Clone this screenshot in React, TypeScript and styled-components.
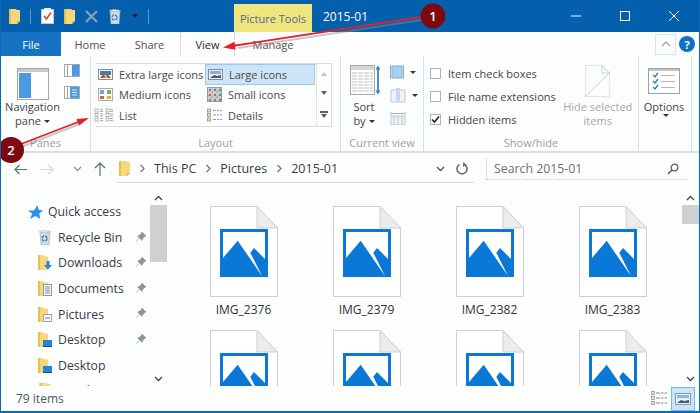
import React from 'react';
import styled, { createGlobalStyle } from 'styled-components';

const GlobalStyle = createGlobalStyle`
  html, body { margin: 0; padding: 0; background: #fff; }
  body { font-family: "Open Sans", "Noto Sans", sans-serif; font-size: 11px; color: #3c3c3c; }
`;

const Window = styled.div`
  position: relative;
  width: 700px;
  height: 413px;
  box-sizing: border-box;
  display: flex;
  flex-direction: column;
  overflow: hidden;
  background: #fcfdfd;
  border: solid #0f68b4;
  border-width: 0 1px 2px 1px;
`;

const TitleBar = styled.div`
  height: 32px;
  flex: none;
  margin: 0 -1px;
  display: flex;
  align-items: center;
  background: #0460ad;
  color: #fff;
`;

const Qat = styled.div`
  width: 234px;
  display: flex;
  align-items: center;
  gap: 10px;
  padding-left: 9px;
  box-sizing: border-box;
`;

const QatSep = styled.span`
  width: 1px;
  height: 15px;
  background: #5f95c7;
`;

const ContextTab = styled.div`
  align-self: flex-end;
  width: 78px;
  height: 28px;
  display: flex;
  align-items: center;
  justify-content: center;
  background: #efe57f;
  color: #54698c;
  font-size: 11px;
`;

const WindowTitle = styled.div`
  margin-left: 11px;
  flex: 1;
  font-size: 12px;
`;

const WinButtons = styled.div`
  display: flex;
  align-items: center;
  gap: 39px;
  padding-right: 21px;
`;

const TabRow = styled.div`
  height: 24px;
  flex: none;
  display: flex;
  align-items: stretch;
  background: #fdfdfd;
`;

const FileTab = styled.div`
  width: 60px;
  display: flex;
  align-items: center;
  justify-content: center;
  background: #1673c4;
  color: #fff;
`;

const Tab = styled.div<{ $w: number; $active?: boolean }>`
  width: ${p => p.$w}px;
  display: flex;
  align-items: center;
  justify-content: center;
  color: ${p => (p.$active ? '#2b2b2b' : '#505050')};
  ${p => p.$active && 'border: dotted #c4c4c4; border-width: 0 1px;'}
`;

const TabTools = styled.div`
  margin-left: auto;
  display: flex;
  align-items: center;
  gap: 3px;
  padding-right: 4px;
`;

const CollapseBtn = styled.div`
  width: 21px;
  height: 21px;
  display: flex;
  align-items: center;
  justify-content: center;
  border: 1px solid #cfe6f7;
  box-sizing: border-box;
`;

const HelpBadge = styled.div`
  width: 16px;
  height: 16px;
  border-radius: 50%;
  background: #0b72c6;
  color: #fff;
  font-size: 11px;
  font-weight: 700;
  display: flex;
  align-items: center;
  justify-content: center;
`;

const Ribbon = styled.div`
  height: 97px;
  flex: none;
  display: flex;
  box-sizing: border-box;
  border-bottom: 2px solid #dcdfe1;
`;

const Group = styled.div<{ $w: number }>`
  width: ${p => p.$w}px;
  flex: none;
  display: flex;
  flex-direction: column;
  box-sizing: border-box;
  border-right: 1px dotted #a9cbe3;
`;

const GroupBody = styled.div`
  flex: 1;
  display: flex;
  min-height: 0;
`;

const GroupLabel = styled.div`
  height: 18px;
  display: flex;
  align-items: center;
  justify-content: center;
  color: #a0a0a0;
`;

const BigButton = styled.div<{ $w: number; $muted?: boolean }>`
  width: ${p => p.$w}px;
  flex: none;
  display: flex;
  flex-direction: column;
  align-items: center;
  padding-top: 9px;
  line-height: 14px;
  text-align: center;
  white-space: nowrap;
  color: ${p => (p.$muted ? '#a8a8a8' : '#444')};
`;

const IconSlot = styled.div<{ $top: number }>`
  height: 35px;
  box-sizing: border-box;
  padding-top: ${p => p.$top}px;
  display: flex;
`;

const Caret = styled.span`
  display: inline-block;
  margin-left: 3px;
  vertical-align: 2px;
  border: 3px solid transparent;
  border-top: 3px solid #333;
  border-bottom: 0;
`;

const PaneIcons = styled.div`
  display: flex;
  flex-direction: column;
  gap: 9px;
  padding-top: 8px;
`;

const Gallery = styled.div`
  margin: 7px 0 0 5px;
  width: 236px;
  height: 64px;
  box-sizing: border-box;
  display: flex;
  border: solid #dcdcdc;
  border-width: 1px 1px 1px 0;
`;

const GalleryGrid = styled.div`
  width: 220px;
  display: grid;
  grid-template-columns: 109px 110px;
  grid-auto-rows: 20.5px;
`;

const GalleryItem = styled.div<{ $selected?: boolean }>`
  display: flex;
  align-items: center;
  gap: 6px;
  padding-left: 2px;
  white-space: nowrap;
  color: #4a4a4a;
  box-sizing: border-box;
  ${p => p.$selected && 'background: #cde4f7; outline: 1px solid #9cc8ee; outline-offset: -1px; padding-left: 3px;'}
`;

const GalleryScroll = styled.div`
  flex: 1;
  display: flex;
  flex-direction: column;
  align-items: center;
  justify-content: space-around;
  border-left: 1px dotted #cfcfcf;
`;

const Tri = styled.span<{ $up?: boolean; $light?: boolean; $dark?: boolean }>`
  width: 0;
  height: 0;
  border: 3.5px solid transparent;
  ${p => (p.$up ? 'border-top: 0;' : 'border-bottom: 0;')}
  ${p => (p.$up ? 'border-bottom' : 'border-top')}: 4px solid ${p => (p.$light ? '#bfc7cf' : p.$dark ? '#10202e' : '#56606b')};
`;

const MoreMark = styled.span`
  display: flex;
  flex-direction: column;
  align-items: center;
  gap: 1px;
  &::before {
    content: '';
    width: 8px;
    height: 2px;
    background: #56606b;
  }
`;

const ViewIcons = styled.div`
  display: flex;
  flex-direction: column;
  gap: 8px;
  padding: 9px 0 0 3px;
`;

const IconWithCaret = styled.div`
  display: flex;
  align-items: center;
  gap: 3px;
`;

const CheckList = styled.div`
  flex: 1;
  padding: 6px 0 0 6px;
  display: grid;
  grid-auto-rows: 23px;
`;

const CheckRow = styled.label`
  display: flex;
  align-items: center;
  gap: 7px;
  white-space: nowrap;
  color: #444;
`;

const CheckBox = styled.span`
  width: 11px;
  height: 11px;
  box-sizing: border-box;
  border: 1px solid #a9b4c0;
  background: #fff;
  display: flex;
  align-items: center;
  justify-content: center;
`;

const AddressRow = styled.div`
  height: 30px;
  flex: none;
  box-sizing: border-box;
  padding-top: 2px;
  display: flex;
  align-items: center;
`;

const NavButtons = styled.div`
  width: 115px;
  flex: none;
  display: flex;
  align-items: center;
  gap: 19px;
  padding-left: 13px;
  box-sizing: border-box;
`;

const NavPair = styled.div`
  display: flex;
  align-items: center;
  gap: 12px;
`;

const PathBox = styled.div`
  width: 358px;
  height: 28px;
  flex: none;
  display: flex;
  align-items: center;
  gap: 8.5px;
  padding: 0 3px;
  box-sizing: border-box;
  border-bottom: 1px solid #d3dde6;
  font-size: 12.5px;
  color: #3e3e3e;
`;

const PathTail = styled.div`
  margin-left: auto;
  display: flex;
  align-items: center;
  gap: 11px;
  padding-right: 2px;
`;

const SearchBox = styled.div`
  margin-left: 12px;
  width: 202px;
  height: 22px;
  flex: none;
  display: flex;
  align-items: center;
  justify-content: space-between;
  padding: 0 9px 0 7px;
  box-sizing: border-box;
  border-left: 1px solid #d8dde2;
  border-bottom: 1px dotted #bfc7cf;
  color: #6f6f6f;
  font-size: 12.3px;
`;

const Body = styled.div`
  flex: 1;
  min-height: 0;
  display: flex;
  overflow: hidden;
`;

const Sidebar = styled.div`
  width: 166px;
  flex: none;
  display: flex;
`;

const Tree = styled.div`
  flex: 1;
  padding-top: 16px;
  overflow: hidden;
  font-size: 12.3px;
  color: #3a3a4a;
`;

const TreeRow = styled.div<{ $root?: boolean }>`
  height: 25.6px;
  display: flex;
  align-items: center;
  gap: ${p => (p.$root ? 5 : 6)}px;
  padding-left: ${p => (p.$root ? 27 : 37)}px;
  position: relative;
  svg { flex: none; }
`;

const Pin = styled.span`
  position: absolute;
  left: 135px;
  top: 7px;
  display: flex;
`;

const ScrollBar = styled.div`
  width: 17px;
  flex: none;
  display: flex;
  flex-direction: column;
  align-items: center;
  padding: 12px 0 4px;
  box-sizing: border-box;
`;

const Thumb = styled.div<{ $h: number }>`
  width: 100%;
  height: ${p => p.$h}px;
  margin-top: 4px;
  background: #cfd1d1;
`;

const Chevron = styled.svg`
  flex: none;
`;

const Spacer = styled.div`
  flex: 1;
`;

const Grid = styled.div`
  flex: 1;
  padding: 23px 0 0 15px;
  display: grid;
  grid-template-columns: repeat(4, 123px);
  grid-auto-rows: 124px;
  overflow: hidden;
`;

const Card = styled.div`
  display: flex;
  flex-direction: column;
  align-items: center;
  gap: 4px;
  font-size: 12px;
  color: #333;
  line-height: 17px;
`;

const StatusBar = styled.div`
  height: 25px;
  flex: none;
  display: flex;
  align-items: center;
  padding-left: 15px;
  color: #4c5a6a;
  font-size: 12px;
`;

const StatusViews = styled.div`
  margin-left: auto;
  display: flex;
  align-items: center;
  gap: 4px;
  padding-right: 4px;
`;

const StatusActive = styled.div`
  width: 24px;
  height: 24px;
  display: flex;
  align-items: center;
  justify-content: center;
  background: #cde4f7;
  border: 1px solid #74b9ed;
  box-sizing: border-box;
`;

const Annotations = styled.svg`
  position: absolute;
  left: -1px;
  top: 0;
  pointer-events: none;
`;

const AnnotationNumber = styled.text`
  font-family: "Open Sans", sans-serif;
  font-size: 13px;
  font-weight: 600;
  fill: #fff;
  text-anchor: middle;
`;

/* drawings */

const Folder = ({ w = 11, h = 15 }: { w?: number; h?: number }) => (
  <svg width={w} height={h} viewBox="0 0 11 15">
    <path d="M0 0h7l1 1h3v11l-3 3H0z" fill="#f6d77e" />
    <path d="M0 0h2v15H0z" fill="#e8bd52" />
    <path d="M8 12l3 0-3 3z" fill="#d8b25a" />
  </svg>
);

const QatCheck = () => (
  <svg width={13} height={16} viewBox="0 0 13 16">
    <rect x=".5" y="1.5" width="12" height="14" fill="#fff" stroke="#c7c7c7" />
    <path d="M3 2V0h7v2z" fill="#e9e9e9" />
    <path d="M3 8l2.500 3L10 4.500" fill="none" stroke="#d9472b" strokeWidth="1.600" />
  </svg>
);

const QatDelete = () => (
  <svg width={13} height={13} viewBox="0 0 13 13">
    <path d="M1 1l11 11M12 1L1 12" stroke="#8aa2b8" strokeWidth="2.200" />
  </svg>
);

const Recycle = () => (
  <svg width={14} height={15} viewBox="0 0 14 15">
    <path d="M2 2h10l-1 13H3z" fill="#d3dade" stroke="#a0aab2" strokeWidth=".6" />
    <path d="M1 1.500L6 .3l7 1.200-6 1.200z" fill="#e8edf0" stroke="#a0aab2" strokeWidth=".4" />
    <circle cx="6.500" cy="8.500" r="2.500" fill="none" stroke="#2b86d6" strokeWidth="1.400" strokeDasharray="3 1" />
  </svg>
);

const WinMin = () => (
  <svg width={10} height={10}><path d="M0 5h10" stroke="#fff" /></svg>
);
const WinMax = () => (
  <svg width={10} height={10}><rect x=".5" y=".5" width="9" height="9" fill="none" stroke="#fff" /></svg>
);
const WinClose = () => (
  <svg width={10} height={10}><path d="M0 0l10 10M10 0L0 10" stroke="#fff" /></svg>
);

const NavPaneIcon = () => (
  <svg width={32} height={32} viewBox="0 0 32 32">
    <rect x=".5" y=".5" width="31" height="31" fill="#fff" stroke="#a8a8a8" />
    <rect x="1" y="1" width="30" height="3" fill="#c9c9c9" />
    <rect x="2" y="5" width="12" height="25" fill="#4a9be3" />
  </svg>
);

const PaneSmall = ({ right }: { right?: boolean }) => (
  <svg width={16} height={13} viewBox="0 0 16 13">
    <rect x=".5" y=".5" width="15" height="12" fill="#fff" stroke="#a8a8a8" />
    <rect x={right ? 6 : 8} y="1" width={right ? 9 : 7} height="11" fill="#4a9be3" />
    <rect x="3" y="1" width="1" height="11" fill="#8fa0ad" />
    {right && <path d="M8 4h5M8 6.500h5M8 9h5" stroke="#d4e8f9" />}
  </svg>
);

const GalleryIcon = ({ kind }: { kind: string }) => {
  if (kind === 'xl') {
    return (
      <svg width={15} height={11} viewBox="0 0 15 11">
        <rect x=".5" y=".5" width="14" height="10" fill="#fff" stroke="#8a8a8a" />
        <rect x="2" y="2" width="11" height="4" fill="#2e80c8" />
        <path d="M2 9l3-4 2 2 2-3 4 5z" fill="#c8512a" />
        <rect x="7" y="6" width="2" height="3" fill="#e8b23e" />
      </svg>
    );
  }
  if (kind === 'large') {
    return (
      <svg width={15} height={11} viewBox="0 0 15 11">
        <rect x=".5" y=".5" width="14" height="10" fill="#e9f1f8" stroke="#8a8a8a" />
        <rect x="2" y="2" width="11" height="3" fill="#7fb3e0" />
        <path d="M2 9l4-3 3 1 4-1v3z" fill="#3f5f78" />
      </svg>
    );
  }
  if (kind === 'medium') {
    return (
      <svg width={15} height={13} viewBox="0 0 15 13">
        <rect x=".5" y=".5" width="14" height="12" fill="#fff" stroke="#aaa" />
        <rect x="2" y="2" width="4" height="4" fill="#6ca6d8" />
        <rect x="9" y="2" width="4" height="4" fill="#88a86a" />
        <rect x="2" y="8" width="4" height="3" fill="#d4683a" />
        <rect x="9" y="8" width="4" height="3" fill="#e0b040" />
      </svg>
    );
  }
  if (kind === 'small') {
    const cells = [0, 1, 2].flatMap(r => [0, 1, 2].map(c => [r, c]));
    const colors = ['#5c8fc0', '#c9683c', '#6f9460'];
    return (
      <svg width={15} height={15} viewBox="0 0 15 15">
        <rect x=".5" y=".5" width="14" height="14" fill="#fff" stroke="#999" />
        <path d="M5 0v15M10 0v15M0 5h15M0 10h15" stroke="#999" />
        {cells.map(([r, c]) => (
          <rect key={`${r}${c}`} x={c * 5 + 1.5} y={r * 5 + 1.5} width="2.500" height="2.500" fill={colors[(r + c) % 3]} />
        ))}
      </svg>
    );
  }
  if (kind === 'list') {
    return (
      <svg width={15} height={14} viewBox="0 0 15 14" overflow="visible">
        {[1, 5.5, 10].map(y => (
          <g key={y}>
            <rect x="-3" y={y} width="3" height="3" fill="#fff" stroke="#999" strokeWidth=".7" />
            <path d={`M2 ${y + 0.5}h3M2 ${y + 2.5}h3`} stroke="#aaa" />
            <rect x="8" y={y} width="3" height="3" fill="#fff" stroke="#999" strokeWidth=".7" />
            <path d={`M12 ${y + 0.5}h3M12 ${y + 2.5}h3`} stroke="#aaa" />
          </g>
        ))}
      </svg>
    );
  }
  return (
    <svg width={15} height={14} viewBox="0 0 15 14">
      {[1, 5.5, 10].map(y => (
        <g key={y}>
          <rect x=".5" y={y} width="3" height="3" fill="#f4d9b0" stroke="#888" strokeWidth=".7" />
          <path d={`M6 ${y + 1.5}h3M10 ${y + 1.5}h2M13 ${y + 1.5}h2`} stroke="#999" />
        </g>
      ))}
    </svg>
  );
};

const SortIcon = () => (
  <svg width={32} height={31} viewBox="0 0 32 31">
    <rect x="2.500" y=".5" width="24" height="29" fill="#fff" stroke="#a6a6a6" />
    <rect x="3" y="1" width="23" height="4" fill="#d5d5d5" />
    {[8, 11, 14, 17, 20, 23, 26].map(y => (
      <path key={y} d={`M4 ${y}h21`} stroke="#bdbdbd" strokeDasharray="5 1" />
    ))}
    <path d="M30 3v24" stroke="#2f83cf" strokeWidth="1.800" />
    <path d="M27.500 4.500L30 .5l2.500 4zM27.500 25.500l2.500 4 2.500-4z" fill="#2f83cf" />
  </svg>
);

const GroupByIcon = () => (
  <svg width={14} height={14} viewBox="0 0 14 14">
    <path d="M1 .5H.5v13H1M13 .5h.5v13H13" fill="none" stroke="#9aa5af" />
    <rect x="2" y="1" width="10" height="12" fill="#a9d0ee" stroke="#7fb4de" />
  </svg>
);

const AddColumnsIcon = () => (
  <svg width={16} height={16} viewBox="0 0 16 16">
    <path d="M1 3h14v12H1z" fill="#eef3f7" stroke="#c0c8cf" />
    <rect x="6" y="1" width="4" height="14" fill="#c5d9ea" />
  </svg>
);

const FitColumnsIcon = () => (
  <svg width={16} height={14} viewBox="0 0 16 14">
    <path d="M1 1v3M15 1v3M2 2.500h12" stroke="#9fb3c4" />
    <rect x="1" y="5" width="14" height="9" fill="#eef3f7" stroke="#c0c8cf" />
    <path d="M4 5v9M8 5v9M12 5v9" stroke="#c0c8cf" />
  </svg>
);

const HideIcon = () => (
  <svg width={25} height={32} viewBox="0 0 25 32">
    <path d="M.5.500H17L24.500 8v23.500H.5z" fill="#fbfdfe" stroke="#c8d8e4" strokeDasharray="1.500 1" />
    <path d="M17 .5V8h7.500zM.5 31.500L24.500 8" fill="none" stroke="#c8d0d6" />
  </svg>
);

const OptionsIcon = () => (
  <svg width={32} height={26} viewBox="0 0 32 26">
    <rect x=".5" y=".5" width="31" height="25" fill="#fff" stroke="#a0a0a0" />
    <rect x="1" y="1" width="30" height="2" fill="#c4c4c4" />
    {[7, 13, 19].map(y => (
      <g key={y}>
        <path d={`M5 ${y}l2 2 3-4`} fill="none" stroke="#2a7fd0" strokeWidth="1.400" />
        <path d={`M13 ${y + 0.5}h14`} stroke="#b5b5b5" />
      </g>
    ))}
  </svg>
);

const ArrowIcon = ({ color = '#5f6b75', dir = 1 }: { color?: string; dir?: number }) => (
  <svg width={14} height={11} viewBox="0 0 14 11">
    <g transform={dir < 0 ? 'matrix(-1 0 0 1 14 0)' : undefined}>
      <path d="M1 5.500h12M5.500 1L1 5.500 5.500 10" fill="none" stroke={color} strokeWidth="1.200" />
    </g>
  </svg>
);

const UpArrow = () => (
  <svg width={12} height={14} viewBox="0 0 12 14">
    <path d="M6 14V1M1 6l5-5 5 5" fill="none" stroke="#5f6b75" strokeWidth="1.200" />
  </svg>
);

const Small = ({ d, color = '#6a737c', w = 9, h = 6 }: { d: string; color?: string; w?: number; h?: number }) => (
  <Chevron width={w} height={h} viewBox={`0 0 ${w} ${h}`}>
    <path d={d} fill="none" stroke={color} strokeWidth="1.300" />
  </Chevron>
);

const ChevUp = () => <Small d="M1 5l3.500-3.500L8 5" color="#444" />;
const ChevDown = () => <Small d="M1 1l3.500 3.500L8 1" color="#444" />;
const Crumb = () => <Small d="M1.500 1l3.500 3.500L1.500 8" w={7} h={9} color="#777" />;

const Refresh = () => (
  <svg width={13} height={13} viewBox="0 0 13 13">
    <path d="M8.500 2.500a5 5 0 1 1-5 0" fill="none" stroke="#6f6f6f" strokeWidth="1.600" />
    <path d="M7 0l3.500 2.500L7 5z" fill="#6f6f6f" />
  </svg>
);

const Magnifier = () => (
  <svg width={12} height={12} viewBox="0 0 12 12">
    <circle cx="7.500" cy="4.500" r="3.300" fill="none" stroke="#5f5f5f" strokeWidth="1.300" />
    <path d="M5 7l-4 4" stroke="#5f5f5f" strokeWidth="1.600" />
  </svg>
);

const Star = () => (
  <svg width={15} height={14} viewBox="0 0 15 14">
    <path d="M9.500 0l1 4.800 4.500.7-3.800 3 1 5.500-4.700-3L2 14l2.200-5.200L0 5.500h6z" fill="#2c8fe8" />
  </svg>
);

const PinIcon = () => (
  <svg width={10} height={10} viewBox="0 0 10 10">
    <path d="M6 0l4 4-1.500.5L6.500 7 6 8.500 1.500 4 3 3.500 5.500 1.500zM3 6.500L.5 9.500" fill="#8c939b" stroke="#8c939b" strokeWidth=".6" />
  </svg>
);

const FolderBadge = ({ badge }: { badge: 'down' | 'doc' | 'pic' | 'desk' }) => (
  <svg width={14} height={15} viewBox="0 0 14 15">
    <path d="M0 0h5l1 1.500h4V15H0z" fill="#f6d77e" />
    <path d="M0 0h2v15H0z" fill="#e8bd52" />
    {badge === 'down' && <path d="M8.500 6h3v4H14l-4 4.500L6 10h2.500z" fill="#2a83d4" />}
    {badge === 'doc' && (
      <g>
        <rect x="5.500" y="3.500" width="8" height="11" fill="#fff" stroke="#8c98a5" />
        <path d="M7 6h5M7 8h5M7 10h5M7 12h5" stroke="#6a8fb2" />
      </g>
    )}
    {badge === 'pic' && (
      <g>
        <rect x="5.500" y="7.500" width="8" height="7" fill="#fff" stroke="#9aa3ab" />
        <path d="M7 11h5" stroke="#5c6d7c" />
      </g>
    )}
    {badge === 'desk' && (
      <g>
        <rect x="5" y="8" width="9" height="6" fill="#1f85dd" />
        <path d="M5 14.500h9" stroke="#445" />
      </g>
    )}
  </svg>
);

const ImageDoc = () => (
  <svg width={68} height={91} viewBox="0 0 68 91">
    <path d="M.5.500H47L67.500 22v68.500H.5z" fill="#fff" stroke="#cfcfcf" />
    <path d="M47 .5V22h20.500z" fill="#ececec" stroke="#cfcfcf" />
    <rect x="10" y="23" width="48" height="48" fill="#0a78d7" />
    <path d="M13 26h42v27L44 42l-3.700 4.700L52 70 27.700 34.700 13 52z" fill="#fff" />
  </svg>
);

const DetailsSmall = () => (
  <svg width={16} height={15} viewBox="0 0 16 15">
    {[1, 6, 11].map(y => (
      <g key={y}>
        <rect x=".5" y={y - 0.5} width="3" height="3" fill="#f3e3c8" stroke="#888" strokeWidth=".7" />
        <path d={`M5 ${y + 1}h4M10 ${y + 1}h2.500M13.500 ${y + 1}h2.500`} stroke="#888" />
      </g>
    ))}
  </svg>
);

const LargeSmall = () => (
  <svg width={16} height={12} viewBox="0 0 16 12">
    <rect x=".5" y=".5" width="15" height="11" fill="#e4eff8" stroke="#8a9aa8" />
    <rect x="2" y="2" width="12" height="3" fill="#86b8e2" />
    <path d="M2 10l4-3 3 1 5-1v3z" fill="#3e5f7a" />
  </svg>
);

const treeItems: { name: string; icon: React.ReactNode; pin?: boolean }[] = [
  { name: 'Recycle Bin', icon: <Recycle />, pin: true },
  { name: 'Downloads', icon: <FolderBadge badge="down" />, pin: true },
  { name: 'Documents', icon: <FolderBadge badge="doc" />, pin: true },
  { name: 'Pictures', icon: <FolderBadge badge="pic" />, pin: true },
  { name: 'Desktop', icon: <FolderBadge badge="desk" />, pin: true },
  { name: 'Desktop', icon: <FolderBadge badge="desk" /> },
  { name: 'Dropbox', icon: <Folder w={14} h={15} /> },
];

const files = ['IMG_2376', 'IMG_2379', 'IMG_2382', 'IMG_2383', '', '', '', ''];

const layoutOptions = [
  { label: 'Extra large icons', kind: 'xl' },
  { label: 'Large icons', kind: 'large', selected: true },
  { label: 'Medium icons', kind: 'medium' },
  { label: 'Small icons', kind: 'small' },
  { label: 'List', kind: 'list' },
  { label: 'Details', kind: 'details' },
];

export default function App() {
  return (
    <Window>
      <GlobalStyle />
      <TitleBar>
        <Qat>
          <Folder />
          <QatSep />
          <QatCheck />
          <Folder />
          <QatDelete />
          <Recycle />
          <Tri $dark />
          <QatSep />
        </Qat>
        <ContextTab>Picture Tools</ContextTab>
        <WindowTitle>2015-01</WindowTitle>
        <WinButtons>
          <WinMin />
          <WinMax />
          <WinClose />
        </WinButtons>
      </TitleBar>

      <TabRow>
        <FileTab>File</FileTab>
        <Tab $w={58}>Home</Tab>
        <Tab $w={61}>Share</Tab>
        <Tab $w={53} $active>View</Tab>
        <Tab $w={76}>Manage</Tab>
        <TabTools>
          <CollapseBtn>
            <Small d="M1 5l4-4 4 4" w={10} color="#a8a8a8" />
          </CollapseBtn>
          <HelpBadge>?</HelpBadge>
        </TabTools>
      </TabRow>

      <Ribbon>
        <Group $w={90}>
          <GroupBody>
            <BigButton $w={63}>
              <IconSlot $top={3}><NavPaneIcon /></IconSlot>
              <span>Navigation</span>
              <span>pane<Caret /></span>
            </BigButton>
            <PaneIcons>
              <PaneSmall />
              <PaneSmall right />
            </PaneIcons>
          </GroupBody>
          <GroupLabel>Panes</GroupLabel>
        </Group>

        <Group $w={250}>
          <GroupBody>
            <Gallery>
              <GalleryGrid>
                {layoutOptions.map(o => (
                  <GalleryItem key={o.label} $selected={o.selected}>
                    <GalleryIcon kind={o.kind} />
                    {o.label}
                  </GalleryItem>
                ))}
              </GalleryGrid>
              <GalleryScroll>
                <Tri $up $light />
                <Tri />
                <MoreMark><Tri /></MoreMark>
              </GalleryScroll>
            </Gallery>
          </GroupBody>
          <GroupLabel>Layout</GroupLabel>
        </Group>

        <Group $w={83}>
          <GroupBody>
            <BigButton $w={46}>
              <IconSlot $top={0}><SortIcon /></IconSlot>
              <span>Sort</span>
              <span>by<Caret /></span>
            </BigButton>
            <ViewIcons>
              <IconWithCaret><GroupByIcon /><Caret /></IconWithCaret>
              <IconWithCaret><AddColumnsIcon /><Caret /></IconWithCaret>
              <FitColumnsIcon />
            </ViewIcons>
          </GroupBody>
          <GroupLabel>Current view</GroupLabel>
        </Group>

        <Group $w={215}>
          <GroupBody>
            <CheckList>
              <CheckRow><CheckBox />Item check boxes</CheckRow>
              <CheckRow><CheckBox />File name extensions</CheckRow>
              <CheckRow>
                <CheckBox>
                  <svg width={9} height={9} viewBox="0 0 9 9">
                    <path d="M1 4.500l2.500 2.500L8 1.500" fill="none" stroke="#222" strokeWidth="1.600" />
                  </svg>
                </CheckBox>
                Hidden items
              </CheckRow>
            </CheckList>
            <BigButton $w={84} $muted>
              <IconSlot $top={0}><HideIcon /></IconSlot>
              <span>Hide selected</span>
              <span>items</span>
            </BigButton>
          </GroupBody>
          <GroupLabel>Show/hide</GroupLabel>
        </Group>

        <Group $w={53}>
          <GroupBody>
            <BigButton $w={50}>
              <IconSlot $top={3}><OptionsIcon /></IconSlot>
              <span>Options</span>
              <Caret />
            </BigButton>
          </GroupBody>
        </Group>
      </Ribbon>

      <AddressRow>
        <NavButtons>
          <NavPair>
            <ArrowIcon />
            <ArrowIcon color="#d5d9dd" dir={-1} />
          </NavPair>
          <NavPair>
            <Small d="M1 1l3.500 3.500L8 1" color="#8a9199" />
            <UpArrow />
          </NavPair>
        </NavButtons>
        <PathBox>
          <Folder />
          <Crumb />
          <span>This PC</span>
          <Crumb />
          <span>Pictures</span>
          <Crumb />
          <span>2015-01</span>
          <PathTail>
            <Small d="M1 1l3.500 3.500L8 1" color="#555" />
            <Refresh />
          </PathTail>
        </PathBox>
        <SearchBox>
          <span>Search 2015-01</span>
          <Magnifier />
        </SearchBox>
      </AddressRow>

      <Body>
        <Sidebar>
          <Tree>
            <TreeRow $root><Star />Quick access</TreeRow>
            {treeItems.map((item, i) => (
              <TreeRow key={i}>
                {item.icon}
                {item.name}
                {item.pin && <Pin><PinIcon /></Pin>}
              </TreeRow>
            ))}
          </Tree>
          <ScrollBar>
            <ChevUp />
            <Thumb $h={57} />
            <Spacer />
            <ChevDown />
          </ScrollBar>
        </Sidebar>
        <Grid>
          {files.map((f, i) => (
            <Card key={i}>
              <ImageDoc />
              {f && <span>{f}</span>}
            </Card>
          ))}
        </Grid>
        <ScrollBar>
          <ChevUp />
          <Thumb $h={19} />
          <Spacer />
          <ChevDown />
        </ScrollBar>
      </Body>

      <StatusBar>
        79 items
        <StatusViews>
          <DetailsSmall />
          <StatusActive><LargeSmall /></StatusActive>
        </StatusViews>
      </StatusBar>

      <Annotations width={700} height={413} viewBox="0 0 700 413">
        <path d="M428 19L238 48M16 149L82 123" stroke="#8a8a8a" strokeWidth="2" opacity=".45" />
        <path d="M428 16L232 46M16 146L82 120.500" stroke="#e2202c" strokeWidth="1.800" />
        <path d="M223 47.500l12.600 2.200-1.200-8zM89 118L79 125.600 76.500 119z" fill="#e2202c" />
        <circle cx="433" cy="16" r="12.500" fill="#7d0a0f" />
        <circle cx="11" cy="150" r="13" fill="#7d0a0f" />
        <AnnotationNumber x="433" y="21">1</AnnotationNumber>
        <AnnotationNumber x="11" y="155">2</AnnotationNumber>
      </Annotations>
    </Window>
  );
}
